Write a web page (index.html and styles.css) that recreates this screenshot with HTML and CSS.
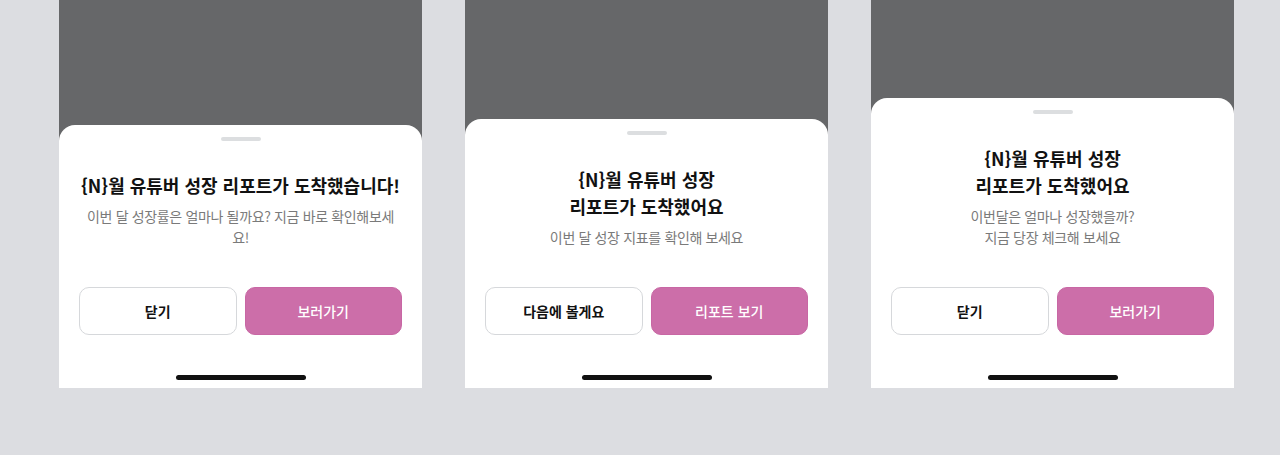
FILE: index.html
```html
<!DOCTYPE html>
<html lang="ko">
<head>
<meta charset="utf-8">
<link rel="stylesheet" href="styles.css">
</head>
<body>
<div class="stage">
  <div class="phone">
    <div class="sheet">
      <div class="handle"></div>
      <h2 class="title">{N}월 유튜버 성장 리포트가 도착했습니다!</h2>
      <p class="desc">이번 달 성장률은 얼마나 될까요? 지금 바로 확인해보세요!</p>
      <div class="actions">
        <button class="btn btn-ghost">닫기</button>
        <button class="btn btn-primary">보러가기</button>
      </div>
      <div class="home"></div>
    </div>
  </div>
  <div class="phone">
    <div class="sheet">
      <div class="handle"></div>
      <h2 class="title">{N}월 유튜버 성장<br>리포트가 도착했어요</h2>
      <p class="desc">이번 달 성장 지표를 확인해 보세요</p>
      <div class="actions">
        <button class="btn btn-ghost">다음에 볼게요</button>
        <button class="btn btn-primary">리포트 보기</button>
      </div>
      <div class="home"></div>
    </div>
  </div>
  <div class="phone">
    <div class="sheet">
      <div class="handle"></div>
      <h2 class="title">{N}월 유튜버 성장<br>리포트가 도착했어요</h2>
      <p class="desc">이번달은 얼마나 성장했을까?<br>지금 당장 체크해 보세요</p>
      <div class="actions">
        <button class="btn btn-ghost">닫기</button>
        <button class="btn btn-primary">보러가기</button>
      </div>
      <div class="home"></div>
    </div>
  </div>
</div>
</body>
</html>
```
FILE: styles.css
```css
* { box-sizing: border-box; }
html, body {
  margin: 0;
  padding: 0;
  background: #dcdde1;
  font-family: "Noto Sans CJK KR", "Noto Sans", sans-serif;
}
.stage {
  display: flex;
  gap: 43px;
  padding-left: 59px;
  height: 455px;
}
.phone {
  width: 363px;
  height: 388px;
  background: #666769;
  display: flex;
  flex-direction: column;
  justify-content: flex-end;
}
.sheet {
  background: #fff;
  border-radius: 16px 16px 0 0;
  padding: 12px 20px 8px;
  display: flex;
  flex-direction: column;
  align-items: center;
}
.handle {
  width: 40px;
  height: 4px;
  border-radius: 2px;
  background: #dcdee0;
  margin-bottom: 31px;
}
.title {
  margin: 0;
  font-size: 18px;
  font-weight: 700;
  line-height: 27px;
  color: #111;
  text-align: center;
}
.desc {
  margin: 7px 0 0;
  font-size: 14px;
  line-height: 21px;
  color: #7a7a7a;
  text-align: center;
  letter-spacing: -0.35px;
  max-width: 312px;
}
.actions {
  margin-top: 39px;
  display: flex;
  gap: 8px;
  width: 100%;
}
.btn {
  flex: 1;
  height: 48px;
  border-radius: 10px;
  font-family: inherit;
  font-size: 14px;
  font-weight: 700;
  cursor: pointer;
}
.btn-ghost {
  background: #fff;
  border: 1px solid #d6d8db;
  color: #111;
}
.btn-primary {
  background: #cc6ea9;
  border: 1px solid #c867a4;
  color: #fff;
  font-weight: 500;
}
.home {
  margin-top: 40px;
  width: 130px;
  height: 5px;
  border-radius: 3px;
  background: #111;
}
```
